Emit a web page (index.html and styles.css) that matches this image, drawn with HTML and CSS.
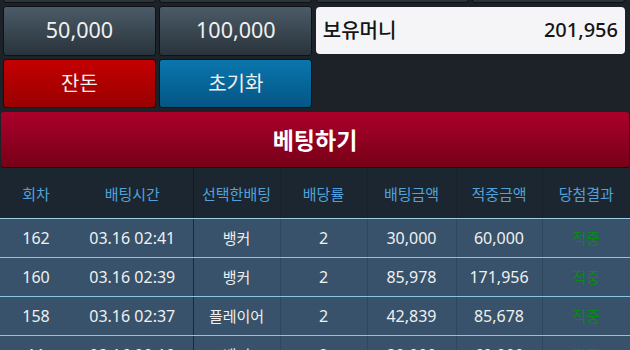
FILE: index.html
```html
<!DOCTYPE html>
<html lang="ko">
<head>
<meta charset="utf-8">
<link rel="stylesheet" href="styles.css">
</head>
<body>
<div class="panel">
  <div class="btn-grid">
    <button class="btn dark partial"></button>
    <button class="btn dark partial"></button>
    <button class="btn dark partial"></button>
    <button class="btn dark partial"></button>
    <button class="btn dark num">50,000</button>
    <button class="btn dark num">100,000</button>
    <div class="money"><span class="money-label">보유머니</span><span class="money-value">201,956</span></div>
    <button class="btn red">잔돈</button>
    <button class="btn blue">초기화</button>
  </div>
  <button class="bet">베팅하기</button>
  <table class="history">
    <colgroup>
      <col class="c1"><col class="c2"><col class="c3"><col class="c4"><col class="c5"><col class="c6"><col class="c7">
    </colgroup>
    <thead>
      <tr><th>회차</th><th>배팅시간</th><th class="sep">선택한배팅</th><th class="sub">배당률</th><th class="sub">배팅금액</th><th class="sub">적중금액</th><th class="sub">당첨결과</th></tr>
    </thead>
    <tbody>
      <tr><td>162</td><td>03.16 02:41</td><td class="sep ko">뱅커</td><td class="sub">2</td><td class="sub">30,000</td><td class="sub">60,000</td><td class="sub ko win">적중</td></tr>
      <tr><td>160</td><td>03.16 02:39</td><td class="sep ko">뱅커</td><td class="sub">2</td><td class="sub">85,978</td><td class="sub">171,956</td><td class="sub ko win">적중</td></tr>
      <tr><td>158</td><td>03.16 02:37</td><td class="sep ko">플레이어</td><td class="sub">2</td><td class="sub">42,839</td><td class="sub">85,678</td><td class="sub ko win">적중</td></tr>
      <tr><td>11</td><td>03.16 00:10</td><td class="sep ko">뱅커</td><td class="sub">2</td><td class="sub">30,000</td><td class="sub">60,000</td><td class="sub ko win">적중</td></tr>
    </tbody>
  </table>
</div>
</body>
</html>
```

FILE: styles.css
```css
html, body {
  margin: 0;
  padding: 0;
  background: #1c2228;
  overflow: hidden;
}
body {
  font-family: "Noto Sans", "Noto Sans CJK KR", sans-serif;
  width: 630px;
  height: 350px;
}
.panel {
  display: flex;
  flex-direction: column;
}
.btn-grid {
  display: grid;
  grid-template-columns: repeat(4, 1fr);
  grid-template-rows: 50px 50px 49px;
  column-gap: 3.5px;
  row-gap: 3px;
  padding: 0 5px 0 3px;
  margin-top: -47px;
}
.btn {
  font-family: "Noto Sans CJK KR", sans-serif;
  font-size: 20px;
  font-weight: 400;
  color: #f0f0f0;
  border: 1px solid #0e1215;
  border-radius: 3px;
  padding: 0 0 2px;
  margin: 0;
  line-height: 1;
}
.btn.num {
  font-family: "Noto Sans", sans-serif;
  font-size: 21.5px;
}
.btn.dark {
  background: linear-gradient(#4b5b67, #29333b);
}
.btn.red {
  background: linear-gradient(#c40000, #9a0000);
}
.btn.blue {
  background: linear-gradient(#0a76ad, #045685);
}
.money {
  grid-column: span 2;
  margin: 1px 0 2px;
  background: #f5f5f7;
  border-radius: 4px;
  display: flex;
  justify-content: space-between;
  align-items: center;
  padding: 0 7px 2px 7px;
  color: #151515;
}
.money-label {
  font-family: "Noto Sans CJK KR", sans-serif;
  font-size: 20px;
  font-weight: 500;
}
.money-value {
  font-family: "Noto Sans", sans-serif;
  font-size: 20px;
  font-weight: 500;
}
.bet {
  margin: 4px 1px 0;
  height: 56px;
  border: none;
  border-bottom: 1px solid #0a0a0a;
  border-radius: 3px;
  background: linear-gradient(#ab002b, #770018);
  color: #ffffff;
  font-family: "Noto Sans CJK KR", sans-serif;
  font-size: 23px;
  font-weight: 700;
  padding: 0 0 2px;
}
.history {
  width: 630px;
  border-collapse: collapse;
  table-layout: fixed;
  margin-top: 0;
}
.c1 { width: 72px; }
.c2 { width: 121px; }
.c3 { width: 87px; }
.c4 { width: 87px; }
.c5 { width: 89px; }
.c6 { width: 86px; }
.c7 { width: 88px; }
.history th {
  height: 50px;
  padding: 0;
  background: #1b2631;
  color: #4fa2dc;
  font-family: "Noto Sans CJK KR", sans-serif;
  font-size: 15px;
  font-weight: 400;
  border-bottom: 1px solid #9fcbe4;
}
.history td {
  height: 37px;
  padding: 0 0 1px;
  background: #37526a;
  color: #f0f0f0;
  font-size: 16px;
  text-align: center;
  border-bottom: 1px solid #8cc4e4;
  white-space: nowrap;
}
.history td.ko {
  font-family: "Noto Sans CJK KR", sans-serif;
  font-size: 15px;
}
.history th.sep { border-left: 1px solid #111a22; }
.history td.sep { border-left: 1px solid #1c2a36; }
.history th.sub { border-left: 1px solid #17212b; }
.history td.sub { border-left: 1px solid #2f475c; }
.history td.win { color: #0a8a14; }
```
